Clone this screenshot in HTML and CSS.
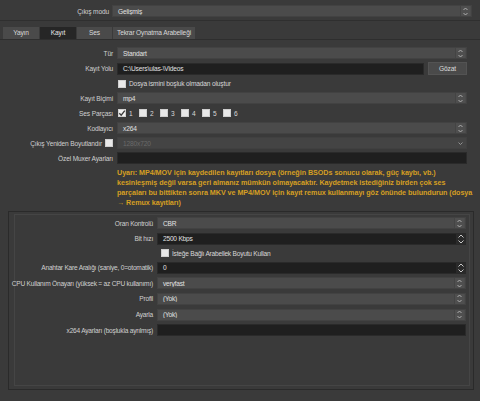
FILE: index.html
```html
<!DOCTYPE html>
<html lang="tr">
<head>
<meta charset="utf-8">
<link rel="stylesheet" href="styles.css">
</head>
<body>
<div class="top">
  <div class="lbl"><span>Çıkış modu</span></div>
  <div class="combo"><span class="val">Gelişmiş</span><span class="arr"><svg width="7" height="11" viewBox="0 0 7 11"><path d="M1.5 4 L3.5 2 L5.5 4 M1.5 7 L3.5 9 L5.5 7" fill="none" stroke="#b8b8b8" stroke-width="0.9"/></svg></span></div>
</div>

<div class="tabs">
  <div class="tab w1">Yayın</div>
  <div class="tab w2 sel">Kayıt</div>
  <div class="tab w3">Ses</div>
  <div class="tab w4">Tekrar Oynatma Arabelleği</div>
</div>

<div class="pane">
  <div class="form">
    <div class="lbl"><span>Tür</span></div>
    <div class="combo"><span class="val">Standart</span><span class="arr"><svg width="7" height="11" viewBox="0 0 7 11"><path d="M1.5 4 L3.5 2 L5.5 4 M1.5 7 L3.5 9 L5.5 7" fill="none" stroke="#b8b8b8" stroke-width="0.9"/></svg></span></div>

    <div class="lbl"><span>Kayıt Yolu</span></div>
    <div class="pathrow"><div class="edit"><span class="val">C:\Users\ulas-\Videos</span></div><div class="btn">Gözat</div></div>

    <div></div>
    <div class="chk"><span class="box"></span>Dosya ismini boşluk olmadan oluştur</div>

    <div class="lbl"><span>Kayıt Biçimi</span></div>
    <div class="combo"><span class="val">mp4</span><span class="arr"><svg width="7" height="11" viewBox="0 0 7 11"><path d="M1.5 4 L3.5 2 L5.5 4 M1.5 7 L3.5 9 L5.5 7" fill="none" stroke="#b8b8b8" stroke-width="0.9"/></svg></span></div>

    <div class="lbl"><span>Ses Parçası</span></div>
    <div class="tracks">
      <div class="chk"><span class="box on"><svg width="8" height="8" viewBox="0 0 8 8"><path d="M1.3 4.2 L3.2 6.2 L6.8 1.6" fill="none" stroke="#3a3a3a" stroke-width="1.3"/></svg></span>1</div>
      <div class="chk"><span class="box"></span>2</div>
      <div class="chk"><span class="box"></span>3</div>
      <div class="chk"><span class="box"></span>4</div>
      <div class="chk"><span class="box"></span>5</div>
      <div class="chk"><span class="box"></span>6</div>
    </div>

    <div class="lbl"><span>Kodlayıcı</span></div>
    <div class="combo"><span class="val">x264</span><span class="arr"><svg width="7" height="11" viewBox="0 0 7 11"><path d="M1.5 4 L3.5 2 L5.5 4 M1.5 7 L3.5 9 L5.5 7" fill="none" stroke="#b8b8b8" stroke-width="0.9"/></svg></span></div>

    <div class="lbl lblchk"><span>Çıkış Yeniden Boyutlandır</span><span class="box"></span></div>
    <div class="combo dis"><span class="val">1280x720</span><span class="arr"><svg width="7" height="11" viewBox="0 0 7 11"><path d="M1.5 4.5 L3.5 6.5 L5.5 4.5" fill="none" stroke="#9a9a9a" stroke-width="0.9"/></svg></span></div>

    <div class="lbl"><span>Özel Muxer Ayarları</span></div>
    <div class="edit"></div>
  </div>

  <p class="warn">Uyarı: MP4/MOV için kaydedilen kayıtları dosya (örneğin BSODs sonucu olarak, güç kaybı, vb.)<br>kesinleşmiş değil varsa geri almanız mümkün olmayacaktır. Kaydetmek istediğiniz birden çok ses<br>parçaları bu bittikten sonra MKV ve MP4/MOV için kayıt remux kullanmayı göz önünde bulundurun (dosya<br>→ Remux kayıtları)</p>

  <div class="outer">
    <div class="inner">
      <div class="form2">
        <div class="lbl"><span>Oran Kontrolü</span></div>
        <div class="combo"><span class="val">CBR</span><span class="arr"><svg width="7" height="11" viewBox="0 0 7 11"><path d="M1.5 4 L3.5 2 L5.5 4 M1.5 7 L3.5 9 L5.5 7" fill="none" stroke="#b8b8b8" stroke-width="0.9"/></svg></span></div>

        <div class="lbl"><span>Bit hızı</span></div>
        <div class="spin"><span class="val">2500 Kbps</span><span class="sarr"><svg width="8" height="12" viewBox="0 0 8 12"><path d="M1.5 4.5 L4 2 L6.5 4.5 M1.5 7.5 L4 10 L6.5 7.5" fill="none" stroke="#c8c8c8" stroke-width="1"/></svg></span></div>

        <div></div>
        <div class="chk small"><span class="box"></span>İsteğe Bağlı Arabellek Boyutu Kullan</div>

        <div class="lbl"><span>Anahtar Kare Aralığı (saniye, 0=otomatik)</span></div>
        <div class="spin"><span class="val">0</span><span class="sarr"><svg width="8" height="12" viewBox="0 0 8 12"><path d="M1.5 4.5 L4 2 L6.5 4.5 M1.5 7.5 L4 10 L6.5 7.5" fill="none" stroke="#c8c8c8" stroke-width="1"/></svg></span></div>

        <div class="lbl"><span>CPU Kullanım Önayarı (yüksek = az CPU kullanımı)</span></div>
        <div class="combo"><span class="val">veryfast</span><span class="arr"><svg width="7" height="11" viewBox="0 0 7 11"><path d="M1.5 4 L3.5 2 L5.5 4 M1.5 7 L3.5 9 L5.5 7" fill="none" stroke="#b8b8b8" stroke-width="0.9"/></svg></span></div>

        <div class="lbl"><span>Profil</span></div>
        <div class="combo"><span class="val">(Yok)</span><span class="arr"><svg width="7" height="11" viewBox="0 0 7 11"><path d="M1.5 4 L3.5 2 L5.5 4 M1.5 7 L3.5 9 L5.5 7" fill="none" stroke="#b8b8b8" stroke-width="0.9"/></svg></span></div>

        <div class="lbl"><span>Ayarla</span></div>
        <div class="combo"><span class="val">(Yok)</span><span class="arr"><svg width="7" height="11" viewBox="0 0 7 11"><path d="M1.5 4 L3.5 2 L5.5 4 M1.5 7 L3.5 9 L5.5 7" fill="none" stroke="#b8b8b8" stroke-width="0.9"/></svg></span></div>

        <div class="lbl"><span>x264 Ayarları (boşlukla ayrılmış)</span></div>
        <div class="edit"></div>
      </div>
    </div>
  </div>
</div>
</body>
</html>
```

FILE: styles.css
```css
* { box-sizing: border-box; }
html, body {
  margin: 0;
  padding: 0;
  background: #3a3a3a;
  width: 480px;
  height: 401px;
  overflow: hidden;
  font-family: "Liberation Sans", Arial, sans-serif;
  font-size: 6.6px;
  letter-spacing: -0.15px;
  color: #d4d4d4;
}
.top {
  display: grid;
  grid-template-columns: 109px 1fr;
  column-gap: 3px;
  padding: 5px 8px 3px 0;
  border-bottom: 1px solid #2f2f2f;
  align-items: center;
}
.lbl {
  display: flex;
  justify-content: flex-end;
  align-items: center;
  white-space: nowrap;
  color: #d0d0d0;
  height: 12px;
  min-width: 0;
}
.lbl span { flex: none; }
.combo {
  height: 12px;
  background: #4b4b4b;
  border: 1px solid #424242;
  display: flex;
  align-items: center;
  color: #e2e2e2;
}
.combo .val, .edit .val, .spin .val {
  flex: 1;
  padding-left: 5px;
  white-space: nowrap;
  overflow: hidden;
}
.arr {
  width: 10px;
  height: 10px;
  display: flex;
  align-items: center;
  justify-content: center;
  background: #4f4f4f;
  border-left: 1px solid #444;
  margin-right: 1px;
}
.combo.dis { background: #444; border-color: #404040; color: #6a6a6a; }
.combo.dis .arr { background: #444; border-left: none; }
.tabs {
  display: flex;
  gap: 1px;
  padding: 6px 0 0 3px;
  height: 18px;
}
.tab {
  height: 12px;
  background: #4a4a4a;
  color: #d8d8d8;
  text-align: center;
  line-height: 12px;
  white-space: nowrap;
}
.tab.sel { background: #262626; color: #e6e6e6; }
.w1 { width: 36px; }
.w2 { width: 36px; }
.w3 { width: 35px; }
.w4 { width: 82px; }
.pane {
  border-top: 1px solid #2e2e2e;
  padding-top: 7px;
}
.form {
  display: grid;
  grid-template-columns: 113px 1fr;
  column-gap: 4px;
  row-gap: 3px;
  padding-right: 13px;
  align-items: center;
}
.edit {
  height: 12px;
  background: #1f1f1f;
  border: 1px solid #2a2a2a;
  display: flex;
  align-items: center;
  color: #e2e2e2;
}
.pathrow {
  display: flex;
  gap: 4px;
  align-items: center;
}
.pathrow .edit { flex: 1; }
.btn {
  width: 39px;
  height: 13px;
  background: #4a4a4a;
  border: 1px solid #535353;
  color: #dcdcdc;
  text-align: center;
  line-height: 11px;
}
.chk {
  display: flex;
  align-items: center;
  gap: 3px;
  height: 11px;
  white-space: nowrap;
  color: #d8d8d8;
  padding-left: 1px;
}
.chk.small { height: 9.5px; padding-left: 4px; }
.box {
  display: inline-flex;
  width: 8px;
  height: 8px;
  background: #e9e9e9;
  border: 1px solid #cfcfcf;
  flex: none;
}
.box.on { background: #f0f0f0; align-items: center; justify-content: center; }
.box.on svg { margin: -1px; }
.tracks {
  display: flex;
  gap: 6px;
  height: 11px;
  align-items: center;
}
.tracks .chk { width: 15px; }
.lblchk { gap: 3px; }
.warn {
  margin: 4px 0 0 117px;
  font-weight: bold;
  color: #d59f22;
  line-height: 10px;
  white-space: nowrap;
  font-size: 7.2px;
  letter-spacing: -0.05px;
}
.outer {
  margin: 3px 6px 0 8px;
  height: 179px;
  border: 1px solid #2a2a2a;
  padding: 2px 3px 3px 5px;
}
.inner {
  height: 100%;
  border: 1px solid #454545;
  padding: 2px 3px 0 0;
}
.form2 {
  display: grid;
  grid-template-columns: 138px 1fr;
  column-gap: 4px;
  row-gap: 3.7px;
  align-items: center;
  letter-spacing: -0.22px;
}
.spin {
  height: 12px;
  background: #1f1f1f;
  border: 1px solid #2a2a2a;
  display: flex;
  align-items: center;
  color: #e2e2e2;
}
.sarr {
  width: 10px;
  height: 12px;
  display: flex;
  align-items: center;
  justify-content: center;
  background: #2a2a2a;
  margin-right: -1px;
}
```
